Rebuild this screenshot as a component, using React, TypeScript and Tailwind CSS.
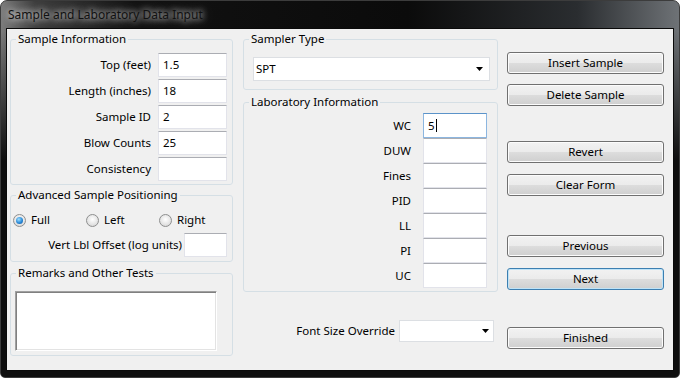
import React from "react";

const FONT = "font-['Noto_Sans',sans-serif] text-[11.5px] text-black";

const BOX = "bg-white border border-[#e2e3ea] border-t-[#abadb3]";

function Field({ value, w, h = 24, focused }: { value?: string; w: number; h?: number; focused?: boolean }) {
  return (
    <div
      className={`${focused ? "bg-white border border-[#8cb6e0] border-t-[#5b93c9]" : BOX} flex items-center pl-[4px] leading-none shrink-0`}
      style={{ width: w, height: h }}
    >
      {value}
      {focused && <span className="inline-block w-px h-[13px] bg-black ml-[1px]" />}
    </div>
  );
}

function Arrow() {
  return (
    <svg width="7" height="4" viewBox="0 0 7 4">
      <path d="M0 0H7L3.5 4Z" fill="#000" />
    </svg>
  );
}

function Group({ title, children, className = "" }: { title: string; children: React.ReactNode; className?: string }) {
  return (
    <fieldset className={`min-w-0 border border-[#d5dfe5] rounded-[3px] ${className}`}>
      <legend className="ml-[5px] px-[2px] leading-[14px]">{title}</legend>
      {children}
    </fieldset>
  );
}

function Radio({ checked }: { checked?: boolean }) {
  return (
    <span className="w-[13px] h-[13px] rounded-full border border-[#8e8f8f] bg-[radial-gradient(circle_at_50%_40%,#ffffff_0%,#e6e6e6_55%,#cfcfcf_100%)] flex items-center justify-center">
      {checked && (
        <span className="w-[7px] h-[7px] rounded-full bg-[radial-gradient(circle_at_40%_35%,#9fe0ff_0%,#2a8ad8_55%,#0b4f96_100%)]" />
      )}
    </span>
  );
}

function Btn({ label, def, className = "" }: { label: string; def?: boolean; className?: string }) {
  return (
    <div
      className={`h-[22px] rounded-[3px] border flex items-center justify-center bg-[linear-gradient(180deg,#f2f2f2_0%,#ebebeb_50%,#dddddd_50%,#cfcfcf_100%)] ${
        def ? "border-[#3c7fb1] shadow-[inset_0_0_0_1px_#bfe3f7]" : "border-[#707070] shadow-[inset_0_0_0_1px_#fcfcfc]"
      } ${className}`}
    >
      {label}
    </div>
  );
}

const SAMPLE = [
  { label: "Top (feet)", value: "1.5" },
  { label: "Length (inches)", value: "18" },
  { label: "Sample ID", value: "2" },
  { label: "Blow Counts", value: "25" },
  { label: "Consistency", value: "" },
];

const LAB = ["WC", "DUW", "Fines", "PID", "LL", "PI", "UC"];

export default function App() {
  return (
    <div className={`w-[680px] h-[378px] bg-white ${FONT}`}>
      <div className="w-full h-full flex flex-col rounded-t-[7px] rounded-b-[5px] overflow-hidden border border-[#3c3c3c] bg-[linear-gradient(180deg,rgba(12,12,12,0)_0px,rgba(12,12,12,0)_30px,#0e0e0e_160px),linear-gradient(90deg,#7c7c7c_0%,#3d3d3d_5%,#111111_20%,#0b0b0b_60%,#2a2d30_85%,#6e7276_100%)]">
        <div className="h-[27px] flex items-center pl-[7px] text-[12px] text-[#111] [text-shadow:0_0_6px_rgba(255,255,255,0.95),0_0_12px_rgba(255,255,255,0.7)]">
          Sample and Laboratory Data Input
        </div>
        <div className="flex-1 px-[5px] pb-[6px]">
          <div className="h-full bg-[#f0f0f0] border border-[#0a0a0a] flex items-start pl-[3px]">
            {/* left column */}
            <div className="w-[223px] flex flex-col">
              <Group title="Sample Information" className="mt-[3px]">
                <div className="pt-[7px] pb-[3px] pr-[5px] flex flex-col gap-[2px]">
                  {SAMPLE.map(r => (
                    <div key={r.label} className="flex items-center justify-end gap-[7px] h-[24px]">
                      <span>{r.label}</span>
                      <Field value={r.value} w={69} />
                    </div>
                  ))}
                </div>
              </Group>
              <Group title="Advanced Sample Positioning" className="mt-[3px]">
                <div className="pt-[10px] pb-[4px] pr-[5px]">
                  <div className="flex items-center h-[16px] pl-[2px]">
                    <div className="w-[73px] flex items-center gap-[5px]">
                      <Radio checked />
                      <span>Full</span>
                    </div>
                    <div className="w-[73px] flex items-center gap-[5px]">
                      <Radio />
                      <span>Left</span>
                    </div>
                    <div className="flex items-center gap-[5px]">
                      <Radio />
                      <span>Right</span>
                    </div>
                  </div>
                  <div className="mt-[5px] flex items-center justify-end gap-[2px]">
                    <span className="whitespace-nowrap">Vert Lbl Offset (log units)</span>
                    <Field w={43} />
                  </div>
                </div>
              </Group>
              <Group title="Remarks and Other Tests" className="mt-[4px]">
                <div className="pt-[11px] pb-[4px] pl-[4px]">
                  <div className="w-[202px] h-[60px] bg-white border border-[#a0a0a0] border-r-[#ffffff] border-b-[#ffffff] shadow-[inset_1px_1px_0_#808080,inset_-1px_-1px_0_#e3e3e3]" />
                </div>
              </Group>
            </div>

            {/* middle column */}
            <div className="w-[255px] ml-[10px] flex flex-col">
              <Group title="Sampler Type" className="mt-[3px]">
                <div className="pt-[11px] pb-[8px] pl-[9px] pr-[7px]">
                  <div className="h-[24px] bg-white border border-[#dcdfe3] flex items-center justify-between pl-[2px] pr-[6px]">
                    <span>SPT</span>
                    <Arrow />
                  </div>
                </div>
              </Group>
              <Group title="Laboratory Information" className="mt-[5px]">
                <div className="pt-[4px] pb-[3px] pr-[10px] flex flex-col">
                  {LAB.map((l, i) => (
                    <div key={l} className="flex items-center justify-end gap-[12px] h-[25px]">
                      <span>{l}</span>
                      <Field w={64} h={25} value={i === 0 ? "5" : ""} focused={i === 0} />
                    </div>
                  ))}
                </div>
              </Group>
              <div className="mt-[28px] flex items-center justify-end gap-[4px] pr-[4px]">
                <span>Font Size Override</span>
                <div className="w-[95px] h-[22px] bg-white border border-[#dcdfe3] flex items-center justify-end pr-[4px]">
                  <Arrow />
                </div>
              </div>
            </div>

            {/* right column */}
            <div className="w-[157px] ml-[9px] flex flex-col">
              <Btn label="Insert Sample" className="mt-[23px]" />
              <Btn label="Delete Sample" className="mt-[10px]" />
              <Btn label="Revert" className="mt-[35px]" />
              <Btn label="Clear Form" className="mt-[11px]" />
              <Btn label="Previous" className="mt-[39px]" />
              <Btn label="Next" def className="mt-[11px]" />
              <Btn label="Finished" className="mt-[37px]" />
            </div>
          </div>
        </div>
      </div>
    </div>
  );
}
